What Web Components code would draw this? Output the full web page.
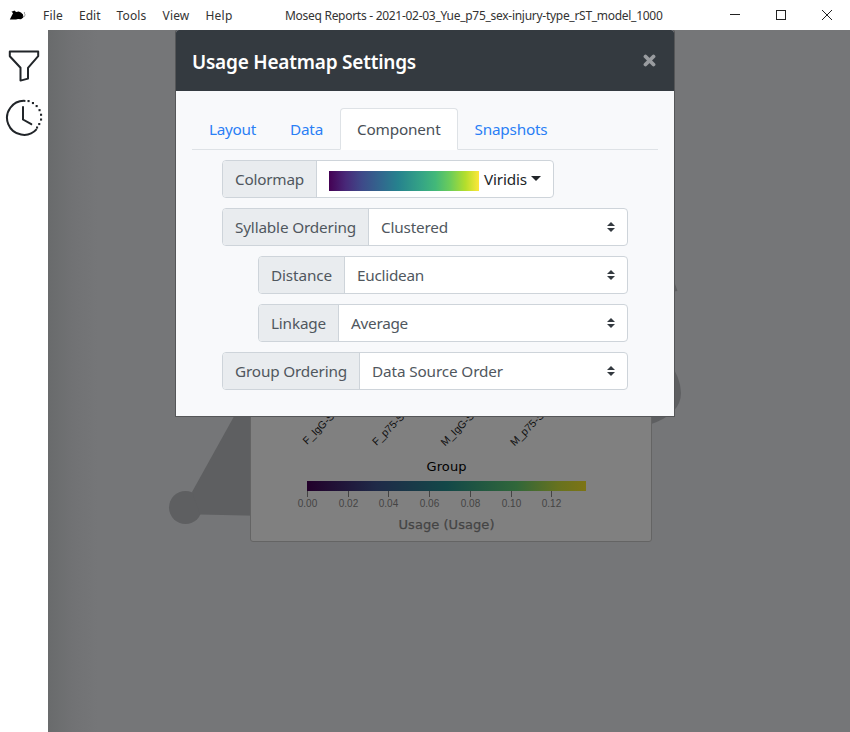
<!DOCTYPE html>
<html lang="en">
<head>
<meta charset="utf-8">
<title>Moseq Reports</title>
<style>
html,body{margin:0;height:100%;overflow:hidden}
body{font-family:"Noto Sans","Open Sans",sans-serif;font-size:15.3px;color:#50575e;background:#fff}
</style>
</head>
<body>
<report-app></report-app>
<script>
const define = (name, html, setup) => customElements.define(name, class extends HTMLElement {
  connectedCallback() {
    if (this.shadowRoot) return;
    const t = document.createElement('template');
    t.innerHTML = typeof html === 'function' ? html(this) : html;
    this.attachShadow({mode: 'open'}).append(t.content.cloneNode(true));
    if (setup) setup(this);
  }
});

// Text tracked to fill a given width
define('fit-text', el => `<style>:host{display:inline-block;width:${el.getAttribute('w')}px;white-space:nowrap;flex:none}span{display:inline-block}</style><span><slot></slot></span>`, el => {
  const s = el.shadowRoot.querySelector('span');
  s.style.letterSpacing = (Number(el.getAttribute('w')) - s.getBoundingClientRect().width) / el.textContent.length + 'px';
});

define('title-bar', `<style>
:host{display:flex;height:30px;background:#fff;color:#333;font-size:12px;line-height:32px;align-items:center;box-sizing:border-box;overflow:hidden}
.logo{width:18px;height:10px;margin-left:9px;margin-right:16px}
nav{display:flex;gap:16px;width:242px}
nav,.title{height:30px}
.win{display:flex;margin-left:auto}
.win svg{width:46px;height:30px;display:block}
</style>
<svg class="logo" viewBox="0 0 18 10"><path d="M.8 9.4 4 3.3 2.5 1.4 4 1.2 5.3.6 7.2 2 9.7 1.5 12 2.5 14 4.5 14.3 7.4 12 9.2 9 9 7 9.5Z" fill="#000"/><path d="M13.7 6.5h1.7l.7-1.7-1-2 .9-.7" fill="none" stroke="#777" stroke-width=".7"/></svg>
<nav><fit-text w="20">File</fit-text><fit-text w="21.5">Edit</fit-text><fit-text w="30">Tools</fit-text><fit-text w="27">View</fit-text><fit-text w="27">Help</fit-text></nav>
<fit-text class="title" w="377.5">Moseq Reports - 2021-02-03_Yue_p75_sex-injury-type_rST_model_1000</fit-text>
<div class="win">
<svg viewBox="0 0 46 30"><path d="M18 14.5h10" stroke="#222"/></svg>
<svg viewBox="0 0 46 30"><rect x="18.5" y="10.5" width="9" height="9" fill="none" stroke="#222"/></svg>
<svg viewBox="0 0 46 30"><path d="m18 10 10 10m0-10-10 10" stroke="#222"/></svg>
</div>`);

define('side-bar', `<style>
:host{display:flex;flex-direction:column;width:48px;background:#fff;align-items:center;gap:12px;padding-top:15px;box-sizing:border-box}
svg{width:40px;height:40px;display:block;flex:none}
</style>
<svg viewBox="0 0 40 40"><path d="M5.8 6.4h28.4v4.8L24 22.8V33.6L16.5 35.6V22.8L5.8 11.2Z" fill="none" stroke="#212529" stroke-width="2" stroke-linejoin="round"/></svg>
<svg viewBox="0 0 40 40"><g fill="none" stroke="#212529" stroke-width="2"><path d="M21.4 3.9A17 17 0 1 0 32.7 32.2"/><path d="M19 10v12.5l8.3 4.7" stroke-linecap="round"/></g><g fill="#212529"><rect x="23.5" y="3" width="2.1" height="2.1"/><rect x="27.9" y="5" width="2.1" height="2.1"/><rect x="31.6" y="8" width="2.1" height="2.1"/><rect x="34.5" y="12.1" width="2.1" height="2.1"/><rect x="36" y="16.7" width="2.1" height="2.1"/><rect x="36" y="21.5" width="2.1" height="2.1"/><rect x="34.2" y="26" width="2.1" height="2.1"/><rect x="32" y="29.5" width="2.1" height="2.1"/></g></svg>`);

// Dimmed report canvas behind the dialog
define('report-canvas', () => {
  const labels = [[307,445,'F_IgG-Saline'],[376.5,446,'F_p75-Saporin'],[445,446.5,'M_IgG-Saline'],[514.5,446.5,'M_p75-Saporin']]
    .map(([x,y,t]) => `<text transform="translate(${x} ${y}) rotate(-45)">${t}</text>`).join('');
  const ticks = ['0.00','0.02','0.04','0.06','0.08','0.10','0.12']
    .map((t,i) => { const x = Math.round(307 + i*40.7) + .5; return `<path d="M${x} 491v6" stroke="#444"/><text x="${x}" y="507" text-anchor="middle">${t}</text>`; }).join('');
  return `<style>:host{display:block}svg{display:block;width:802px;height:702px}</style>
<svg viewBox="48 30 802 702">
<defs><linearGradient id="s"><stop offset="0" stop-color="#696b6c"/><stop offset=".5" stop-color="#717274"/><stop offset="1" stop-color="#757678"/></linearGradient>
<linearGradient id="v"><stop offset="0" stop-color="#22002a"/><stop offset=".25" stop-color="#1f2a48"/><stop offset=".5" stop-color="#134848"/><stop offset=".75" stop-color="#30673a"/><stop offset=".9" stop-color="#67721f"/><stop offset="1" stop-color="#7d7414"/></linearGradient></defs>
<rect x="48" y="30" width="802" height="702" fill="#757678"/><rect x="48" y="30" width="50" height="702" fill="url(#s)"/>
<g fill="#5e5f61"><circle cx="185.5" cy="507.5" r="16.5"/><path d="M192 492 262 366V516L200 514.5Z"/><path d="M650 360h18Q681 378 681 393Q681 414 650 424.5Z"/><path d="M674 281 677.5 291 670 292Z"/></g>
<rect x="250.5" y="100.5" width="401" height="441" rx="2.5" fill="#808080" stroke="#646464"/>
<g font-family="Liberation Sans,Arial,sans-serif" font-size="10.5" fill="#101010">${labels}</g>
<rect x="307" y="481" width="279" height="10" fill="url(#v)"/>
<g font-family="Liberation Sans,Arial,sans-serif" font-size="10" fill="#444">${ticks}</g>
<g font-family="DejaVu Sans,Verdana,sans-serif" font-size="13" text-anchor="middle"><text x="446.5" y="471" textLength="40" fill="#000">Group</text><text x="446.5" y="529" textLength="96" fill="#444" stroke="#444" stroke-width=".25">Usage (Usage)</text></g>
</svg>`;
});

define('tab-item', el => `<style>
:host{display:block;box-sizing:border-box;height:42px;padding:0 16px;border:1px solid transparent;line-height:41px;color:#2a7ff5;margin-bottom:-1px}
:host([active]){background:#fff;border-color:#dee2e6;border-bottom-color:#fff;border-radius:4px 4px 0 0;color:#495057}
</style><fit-text w="${el.getAttribute('w')}">${el.getAttribute('label')}</fit-text>`);

define('setting-row', el => `<style>
:host{display:flex;box-sizing:border-box;height:38px;width:406px;border:1px solid #ced4da;border-radius:4px;background:#fff;overflow:hidden;line-height:37px}
:host([nested]){width:370px;margin-left:36px}
:host([compact]){width:332px}
.label{background:#e9ecef;border-right:1px solid #ced4da;padding:0 12px}
.value{flex:1;display:flex;padding:0 12px;align-items:center;justify-content:space-between}
</style><div class="label"><fit-text w="${el.getAttribute('lw')}">${el.getAttribute('label')}</fit-text></div><div class="value"><slot></slot></div>`);

define('select-value', el => `<style>:host{display:flex;flex:1;align-items:center;justify-content:space-between}svg{width:8px;height:10px;display:block}</style>
<fit-text w="${el.getAttribute('w')}">${el.getAttribute('text')}</fit-text><svg viewBox="0 0 8 10"><path d="M0 4 4 0l4 4ZM0 6l4 4 4-4Z" fill="#343a40"/></svg>`);

define('colormap-value', `<style>
:host{display:flex;flex:1;align-items:center;color:#212529}
.ramp{width:150px;height:20px;margin:3px 5px 0 0;background:linear-gradient(90deg,#440154,#482878 11%,#3e4a89 22%,#31688e 35%,#26828e 46%,#35a585 62%,#42b879 71%,#6dcd59 81%,#b4de2c 91%,#fde73a)}
.caret{border:5px solid transparent;border-top-color:#212529;border-bottom:0;margin-left:4px;margin-top:-2px}
</style><div class="ramp"></div><fit-text w="43">Viridis</fit-text><div class="caret"></div>`);

define('settings-dialog', `<style>
:host{display:block;box-sizing:border-box;width:498px;height:386px;background:#f8f9fb;overflow:hidden;border-radius:3px 3px 0 0;box-shadow:0 0 0 1px #555658}
header{display:flex;align-items:center;justify-content:space-between;height:61px;background:#343a40;padding:0 18px 0 16px;color:#fff;font-size:19px;font-weight:600;line-height:60px;box-sizing:border-box}
header fit-text{padding-top:2px}
header svg{width:13px;height:13px}
.tabs{display:flex;height:41px;margin:17px 16px 10px;border-bottom:1px solid #dee2e6}
.rows{display:flex;flex-direction:column;gap:10px;padding-left:46px}
</style>
<header><fit-text w="224">Usage Heatmap Settings</fit-text><svg viewBox="0 0 13 13"><path d="m2.5 2.5 8 8m0-8-8 8" stroke="#999ca0" stroke-width="3.8" stroke-linecap="round"/></svg></header>
<div class="tabs"><tab-item label="Layout" w="47"></tab-item><tab-item label="Data" w="33"></tab-item><tab-item label="Component" w="83.5" active></tab-item><tab-item label="Snapshots" w="73"></tab-item></div>
<div class="rows">
<setting-row label="Colormap" lw="69" compact><colormap-value></colormap-value></setting-row>
<setting-row label="Syllable Ordering" lw="121"><select-value text="Clustered" w="67"></select-value></setting-row>
<setting-row label="Distance" lw="61" nested><select-value text="Euclidean" w="67"></select-value></setting-row>
<setting-row label="Linkage" lw="55" nested><select-value text="Average" w="57"></select-value></setting-row>
<setting-row label="Group Ordering" lw="112"><select-value text="Data Source Order" w="131"></select-value></setting-row>
</div>`);

define('report-app', `<style>
:host{display:block;width:850px;height:732px}
main{display:flex;height:702px;position:relative;overflow:hidden}
settings-dialog{position:absolute;left:176px;top:0}
</style><title-bar></title-bar><main><side-bar></side-bar><report-canvas></report-canvas><settings-dialog></settings-dialog></main>`);
</script>
</body>
</html>
